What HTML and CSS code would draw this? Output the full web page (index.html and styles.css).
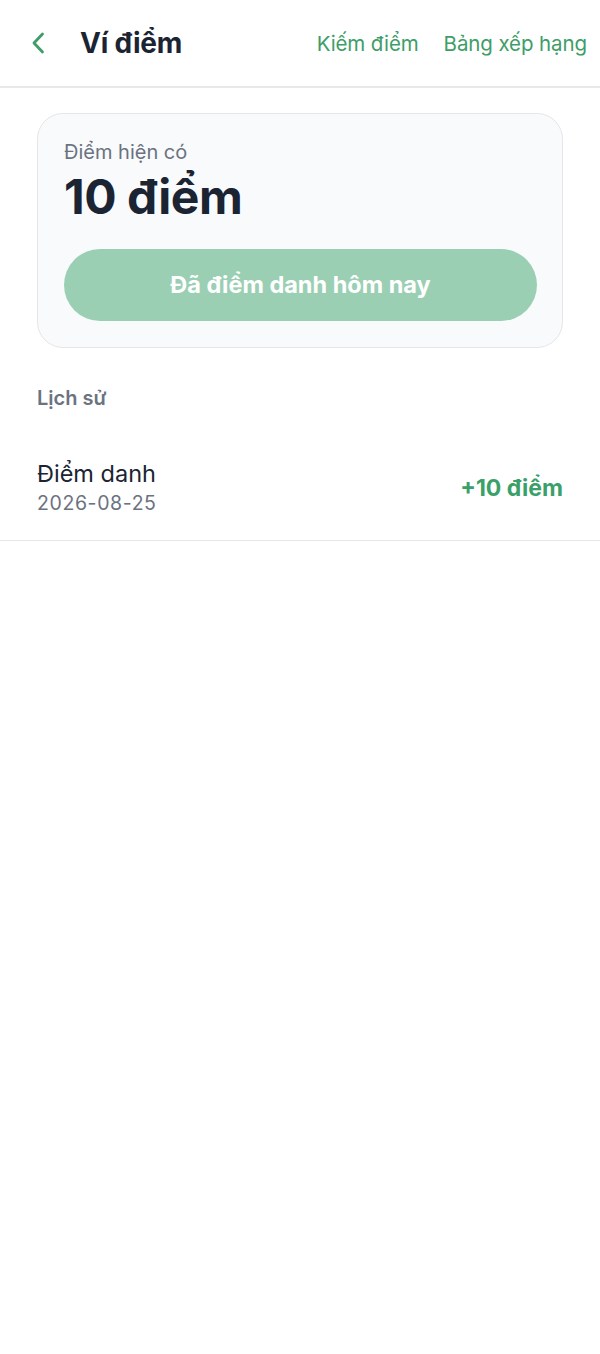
FILE: index.html
```html
<!DOCTYPE html>
<html lang="vi">
<head>
<meta charset="utf-8">
<title>Ví điểm</title>
<link rel="stylesheet" href="styles.css">
</head>
<body>
<header class="topbar">
  <div class="topbar-left">
    <button class="back" aria-label="Quay lại">
      <svg width="16" height="24" viewBox="0 0 16 24"><path d="M12.5 3 L4 12 L12.5 21" fill="none" stroke="#3e9d68" stroke-width="2.8" stroke-linecap="round" stroke-linejoin="round"/></svg>
    </button>
    <h1 class="title">Ví điểm</h1>
  </div>
  <nav class="topbar-links">
    <a class="link">Kiếm điểm</a>
    <a class="link">Bảng xếp hạng</a>
  </nav>
</header>
<main class="content">
  <section class="card">
    <div class="card-label">Điểm hiện có</div>
    <div class="card-points">10 điểm</div>
    <button class="checkin">Đã điểm danh hôm nay</button>
  </section>
  <h2 class="section-title">Lịch sử</h2>
</main>
<ul class="history">
  <li class="history-row">
    <div class="history-info">
      <div class="history-name">Điểm danh</div>
      <div class="history-date">2026-08-25</div>
    </div>
    <div class="history-amount">+10 điểm</div>
  </li>
</ul>
</body>
</html>
```
FILE: styles.css
```css
* { box-sizing: border-box; }
html, body { margin: 0; padding: 0; background: #ffffff; }
body {
  font-family: Inter, "Noto Sans", "Liberation Sans", sans-serif;
  color: #1f2937;
}
.topbar {
  height: 88px;
  display: flex;
  align-items: center;
  justify-content: space-between;
  padding: 0 13px 0 30px;
  border-bottom: 2px solid #e9e9ea;
}
.topbar-left { display: flex; align-items: center; gap: 31px; }
.back {
  border: 0; background: none; padding: 0; margin: 0;
  width: 19px; height: 24px; display: flex; align-items: center;
}
.title {
  margin: 0;
  font-size: 28px;
  font-weight: 700;
  color: #1b2433;
  letter-spacing: -0.2px;
}
.topbar-links { display: flex; gap: 25px; }
.link {
  font-size: 20.5px;
  color: #3e9d68;
  letter-spacing: -0.1px;
}
.content { padding: 25px 37px 0; }
.card {
  background: #f8fafc;
  border: 1.5px solid #e4e6ea;
  border-radius: 26px;
  padding: 26px 25px 26.5px 26px;
}
.card-label {
  font-size: 20px;
  color: #6b7280;
  line-height: 24px;
}
.card-points {
  font-size: 48px;
  font-weight: 700;
  color: #1b2433;
  line-height: 50px;
  margin-top: 8px;
  letter-spacing: -0.5px;
}
.checkin {
  display: block;
  width: 100%;
  height: 72px;
  margin-top: 26.5px;
  border: 0;
  border-radius: 36px;
  background: #9bcfb3;
  color: #ffffff;
  font-family: inherit;
  font-size: 23.5px;
  font-weight: 700;
}
.section-title {
  margin: 38px 0 0;
  font-size: 20px;
  font-weight: 600;
  color: #6b7280;
  line-height: 24px;
}
.history {
  list-style: none;
  margin: 30px 0 0;
  padding: 0;
}
.history-row {
  display: flex;
  align-items: center;
  justify-content: space-between;
  padding: 20px 37px 25px;
  border-bottom: 1.5px solid #e5e6e8;
}
.history-name {
  font-size: 23.5px;
  color: #1b2433;
  line-height: 28px;
}
.history-date {
  font-size: 19.5px;
  color: #6b7280;
  line-height: 24px;
  margin-top: 3px;
  letter-spacing: 0.6px;
}
.history-amount {
  font-size: 23px;
  font-weight: 700;
  color: #3aa06a;
}
```
